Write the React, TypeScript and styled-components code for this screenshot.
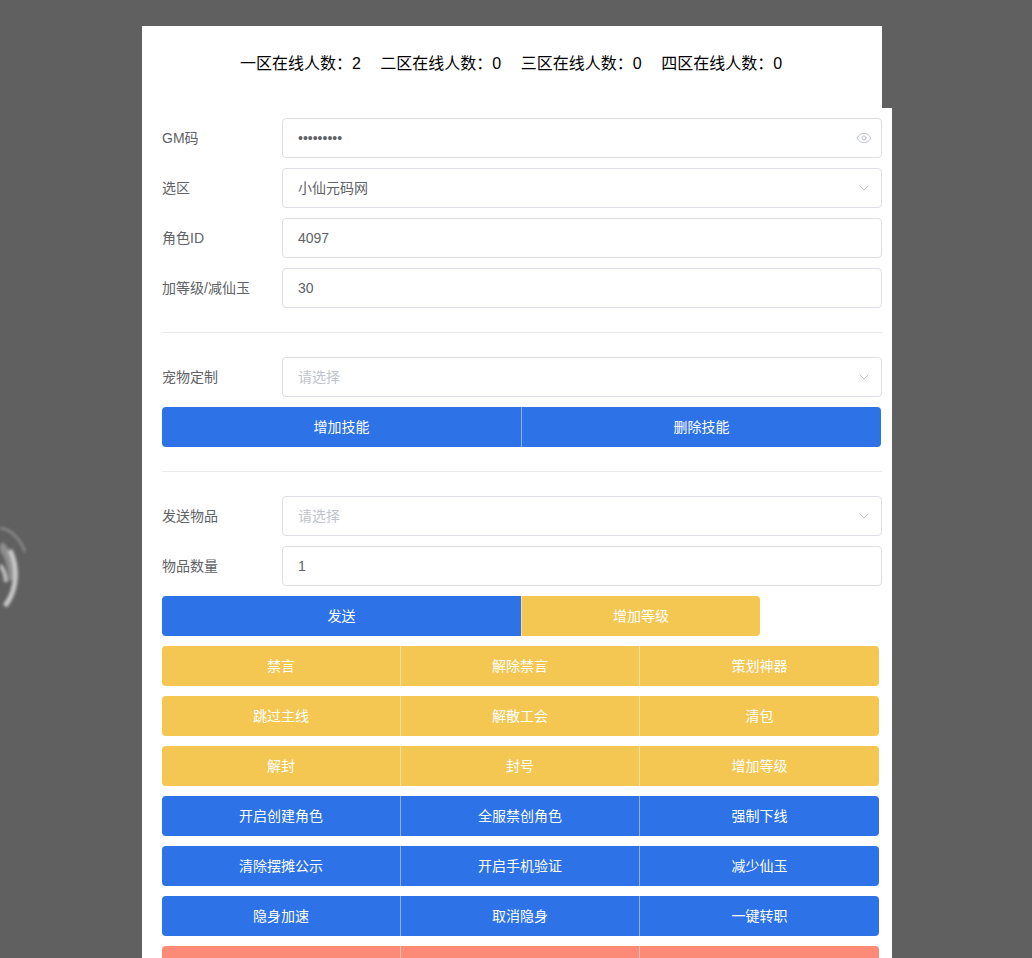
import React from "react";
import styled, { createGlobalStyle } from "styled-components";
import { Eye, ChevronDown } from "lucide-react";

const GlobalStyle = createGlobalStyle`
  html, body {
    margin: 0;
    padding: 0;
    height: 100%;
    overflow: hidden;
    background: #606060;
  }
  body, input, button {
    font-family: "Liberation Sans", "Noto Sans CJK SC", sans-serif;
  }
`;

const Wisp = styled.svg`
  position: absolute;
  left: 0;
  top: 520px;
  filter: blur(1.4px);
`;

const Panel = styled.div`
  width: 740px;
  margin: 26px 0 0 142px;
  background: #fff;
`;

const Online = styled.div`
  display: flex;
  justify-content: center;
  gap: 19.5px;
  padding: 27px 2px 33px 0;
  font-size: 16px;
  line-height: 22px;
  color: #000;
`;

const Form = styled.div`
  width: 720px;
  margin-left: 10px;
  padding: 10px;
  background: #fff;
`;

const Row = styled.div`
  display: flex;
  align-items: center;
  height: 40px;
  margin-bottom: 10px;
`;

const Label = styled.label`
  width: 120px;
  flex: none;
  padding-bottom: 2px;
  font-size: 14px;
  color: #606266;
`;

const Field = styled.div`
  position: relative;
  flex: 1;
  height: 40px;
`;

const Input = styled.input<{ $cjk?: boolean }>`
  box-sizing: border-box;
  width: 100%;
  height: 40px;
  padding: 0 15px ${(p) => (p.$cjk ? "2px" : "0")} 15px;
  border: 1px solid #dcdfe6;
  border-radius: 4px;
  outline: none;
  background: #fff;
  font-size: 14px;
  color: #606266;

  &::placeholder {
    color: #c0c4cc;
  }
`;

const Suffix = styled.span`
  position: absolute;
  right: 10px;
  top: 12px;
  display: flex;
  color: #c0c4cc;
`;

const Divider = styled.hr`
  height: 1px;
  margin: 24px 0;
  border: 0;
  background: #e8eaee;
`;

const ButtonRow = styled.div`
  display: flex;
  margin-bottom: 10px;
`;

const tones = {
  blue: "#2d72e6",
  yellow: "#f4c753",
  red: "#fb8a76",
};

type Tone = keyof typeof tones;

const Action = styled.button<{ $tone: Tone; $width: number }>`
  width: ${(p) => p.$width}px;
  height: 40px;
  padding: 0 0 2px;
  border: 0;
  border-left: 1px solid rgba(255, 255, 255, 0.45);
  background: ${(p) => tones[p.$tone]};
  font-size: 14px;
  color: #fff;

  &:first-child {
    border-left: 0;
    border-radius: 4px 0 0 4px;
  }
  &:last-child {
    border-radius: 0 4px 4px 0;
  }
`;

const gridWidths = [238, 239, 240];

const grids: { tone: Tone; labels: string[] }[] = [
  { tone: "yellow", labels: ["禁言", "解除禁言", "策划神器"] },
  { tone: "yellow", labels: ["跳过主线", "解散工会", "清包"] },
  { tone: "yellow", labels: ["解封", "封号", "增加等级"] },
  { tone: "blue", labels: ["开启创建角色", "全服禁创角色", "强制下线"] },
  { tone: "blue", labels: ["清除摆摊公示", "开启手机验证", "减少仙玉"] },
  { tone: "blue", labels: ["隐身加速", "取消隐身", "一键转职"] },
  { tone: "red", labels: ["", "", ""] },
];

const zones = [
  ["一区", 2],
  ["二区", 0],
  ["三区", 0],
  ["四区", 0],
];

const App = () => {
  return (
    <>
      <GlobalStyle />
      <Wisp width="30" height="95" viewBox="0 0 30 95" fill="none">
        <path d="M0 8 C10 9 20 18 25 32" stroke="#8c8c8c" strokeWidth="2.5" />
        <path d="M0 25 C8 32 12 45 13 60" stroke="#8f8f8f" strokeWidth="8" />
        <path d="M0 45 C4 50 6 55 6 62" stroke="#c0c0c0" strokeWidth="4" />
        <path d="M10 30 C17 45 19 68 5 86" stroke="#c8c8c8" strokeWidth="5" />
      </Wisp>
      <Panel>
        <Online>
          {zones.map(([name, count]) => (
            <span key={name}>
              {name}在线人数：{count}
            </span>
          ))}
        </Online>
        <Form>
          <Row>
            <Label>GM码</Label>
            <Field>
              <Input type="password" defaultValue="123456789" />
              <Suffix>
                <Eye size={16} strokeWidth={1.5} />
              </Suffix>
            </Field>
          </Row>
          <Row>
            <Label>选区</Label>
            <Field>
              <Input $cjk readOnly defaultValue="小仙元码网" />
              <Suffix>
                <ChevronDown size={16} strokeWidth={1.5} />
              </Suffix>
            </Field>
          </Row>
          <Row>
            <Label>角色ID</Label>
            <Field>
              <Input defaultValue="4097" />
            </Field>
          </Row>
          <Row>
            <Label>加等级/减仙玉</Label>
            <Field>
              <Input defaultValue="30" />
            </Field>
          </Row>
          <Divider />
          <Row>
            <Label>宠物定制</Label>
            <Field>
              <Input readOnly placeholder="请选择" />
              <Suffix>
                <ChevronDown size={16} strokeWidth={1.5} />
              </Suffix>
            </Field>
          </Row>
          <ButtonRow>
            <Action $tone="blue" $width={359}>增加技能</Action>
            <Action $tone="blue" $width={360}>删除技能</Action>
          </ButtonRow>
          <Divider />
          <Row>
            <Label>发送物品</Label>
            <Field>
              <Input readOnly placeholder="请选择" />
              <Suffix>
                <ChevronDown size={16} strokeWidth={1.5} />
              </Suffix>
            </Field>
          </Row>
          <Row>
            <Label>物品数量</Label>
            <Field>
              <Input defaultValue="1" />
            </Field>
          </Row>
          <ButtonRow>
            <Action $tone="blue" $width={359}>发送</Action>
            <Action $tone="yellow" $width={239}>增加等级</Action>
          </ButtonRow>
          {grids.map((row, i) => (
            <ButtonRow key={i}>
              {row.labels.map((label, n) => (
                <Action key={n} $tone={row.tone} $width={gridWidths[n]}>
                  {label}
                </Action>
              ))}
            </ButtonRow>
          ))}
        </Form>
      </Panel>
    </>
  );
};

export default App;
